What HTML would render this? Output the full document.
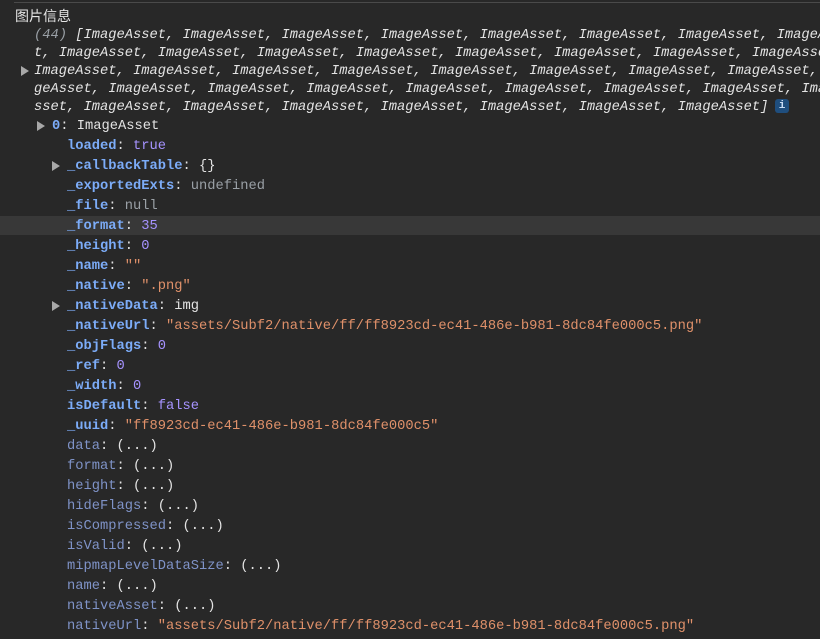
<!DOCTYPE html>
<html><head><meta charset="utf-8"><style>
html,body{margin:0;padding:0;background:#282828;width:820px;height:639px;overflow:hidden}
body{position:relative;font-family:"Liberation Mono",monospace;font-size:13.75px;color:#e3e3e3}
.l{position:absolute;white-space:pre;line-height:18px;height:18px;overflow:hidden;right:0;margin-top:2px}
.it{font-style:italic}
.g{color:#9aa0a6}
.k{color:#7cacf8;font-weight:bold}
.d{color:#7f93c8}
.p{color:#a693ff}
.s{color:#e0916a}
.n{color:#9aa0a6}
.w{color:#e3e3e3}
.tri{position:absolute;width:0;height:0;border-top:5px solid transparent;border-bottom:5px solid transparent;border-left:8px solid #a8a8a8;margin-top:2px}
</style></head><body>
<div style="position:absolute;left:14px;right:0;top:2px;height:1px;background:#4a4a4a"></div>
<div class="l" style="left:15px;top:6px;margin-top:1px;font-family:'Liberation Sans','Noto Sans CJK SC',sans-serif;font-size:14px;">图片信息</div>
<div class="l it" style="left:34px;top:25px"><span class="g">(44) </span>[ImageAsset, ImageAsset, ImageAsset, ImageAsset, ImageAsset, ImageAsset, ImageAsset, ImageAsset, ImageAsset</div>
<div class="l it" style="left:34px;top:43px">t, ImageAsset, ImageAsset, ImageAsset, ImageAsset, ImageAsset, ImageAsset, ImageAsset, ImageAsset, ImageAsset</div>
<div class="tri" style="left:21px;top:64px"></div>
<div class="l it" style="left:34px;top:61px">ImageAsset, ImageAsset, ImageAsset, ImageAsset, ImageAsset, ImageAsset, ImageAsset, ImageAsset, ImageAsset</div>
<div class="l it" style="left:34px;top:79px">geAsset, ImageAsset, ImageAsset, ImageAsset, ImageAsset, ImageAsset, ImageAsset, ImageAsset, ImageAsset</div>
<div class="l it" style="left:34px;top:97px">sset, ImageAsset, ImageAsset, ImageAsset, ImageAsset, ImageAsset, ImageAsset, ImageAsset]</div>
<div style="position:absolute;left:775px;top:99px;width:14px;height:14px;border-radius:3px;background:#1f4e7e;color:#c8dcf4;font-size:11px;line-height:14px;text-align:center;font-family:'Liberation Mono',monospace;font-weight:bold">i</div>

<div style="position:absolute;left:0;right:0;top:216px;height:19px;background:#383838"></div>

<div class="tri" style="left:37px;top:119px"></div>
<div class="l" style="left:52px;top:116px"><span class="k">0</span><span class="w">: ImageAsset</span></div>
<div class="l" style="left:67px;top:136px"><span class="k">loaded</span><span class="w">: </span><span class="p">true</span></div>
<div class="tri" style="left:52px;top:159px"></div>
<div class="l" style="left:67px;top:156px"><span class="k">_callbackTable</span><span class="w">: {}</span></div>
<div class="l" style="left:67px;top:176px"><span class="k">_exportedExts</span><span class="w">: </span><span class="n">undefined</span></div>
<div class="l" style="left:67px;top:196px"><span class="k">_file</span><span class="w">: </span><span class="n">null</span></div>
<div class="l" style="left:67px;top:216px"><span class="k">_format</span><span class="w">: </span><span class="p">35</span></div>
<div class="l" style="left:67px;top:236px"><span class="k">_height</span><span class="w">: </span><span class="p">0</span></div>
<div class="l" style="left:67px;top:256px"><span class="k">_name</span><span class="w">: </span><span class="s">""</span></div>
<div class="l" style="left:67px;top:276px"><span class="k">_native</span><span class="w">: </span><span class="s">".png"</span></div>
<div class="tri" style="left:52px;top:299px"></div>
<div class="l" style="left:67px;top:296px"><span class="k">_nativeData</span><span class="w">: img</span></div>
<div class="l" style="left:67px;top:316px"><span class="k">_nativeUrl</span><span class="w">: </span><span class="s">"assets/Subf2/native/ff/ff8923cd-ec41-486e-b981-8dc84fe000c5.png"</span></div>
<div class="l" style="left:67px;top:336px"><span class="k">_objFlags</span><span class="w">: </span><span class="p">0</span></div>
<div class="l" style="left:67px;top:356px"><span class="k">_ref</span><span class="w">: </span><span class="p">0</span></div>
<div class="l" style="left:67px;top:376px"><span class="k">_width</span><span class="w">: </span><span class="p">0</span></div>
<div class="l" style="left:67px;top:396px"><span class="k">isDefault</span><span class="w">: </span><span class="p">false</span></div>
<div class="l" style="left:67px;top:416px"><span class="k">_uuid</span><span class="w">: </span><span class="s">"ff8923cd-ec41-486e-b981-8dc84fe000c5"</span></div>
<div class="l" style="left:67px;top:436px"><span class="d">data</span><span class="w">: (...)</span></div>
<div class="l" style="left:67px;top:456px"><span class="d">format</span><span class="w">: (...)</span></div>
<div class="l" style="left:67px;top:476px"><span class="d">height</span><span class="w">: (...)</span></div>
<div class="l" style="left:67px;top:496px"><span class="d">hideFlags</span><span class="w">: (...)</span></div>
<div class="l" style="left:67px;top:516px"><span class="d">isCompressed</span><span class="w">: (...)</span></div>
<div class="l" style="left:67px;top:536px"><span class="d">isValid</span><span class="w">: (...)</span></div>
<div class="l" style="left:67px;top:556px"><span class="d">mipmapLevelDataSize</span><span class="w">: (...)</span></div>
<div class="l" style="left:67px;top:576px"><span class="d">name</span><span class="w">: (...)</span></div>
<div class="l" style="left:67px;top:596px"><span class="d">nativeAsset</span><span class="w">: (...)</span></div>
<div class="l" style="left:67px;top:616px"><span class="d">nativeUrl</span><span class="w">: </span><span class="s">"assets/Subf2/native/ff/ff8923cd-ec41-486e-b981-8dc84fe000c5.png"</span></div>
</body></html>
